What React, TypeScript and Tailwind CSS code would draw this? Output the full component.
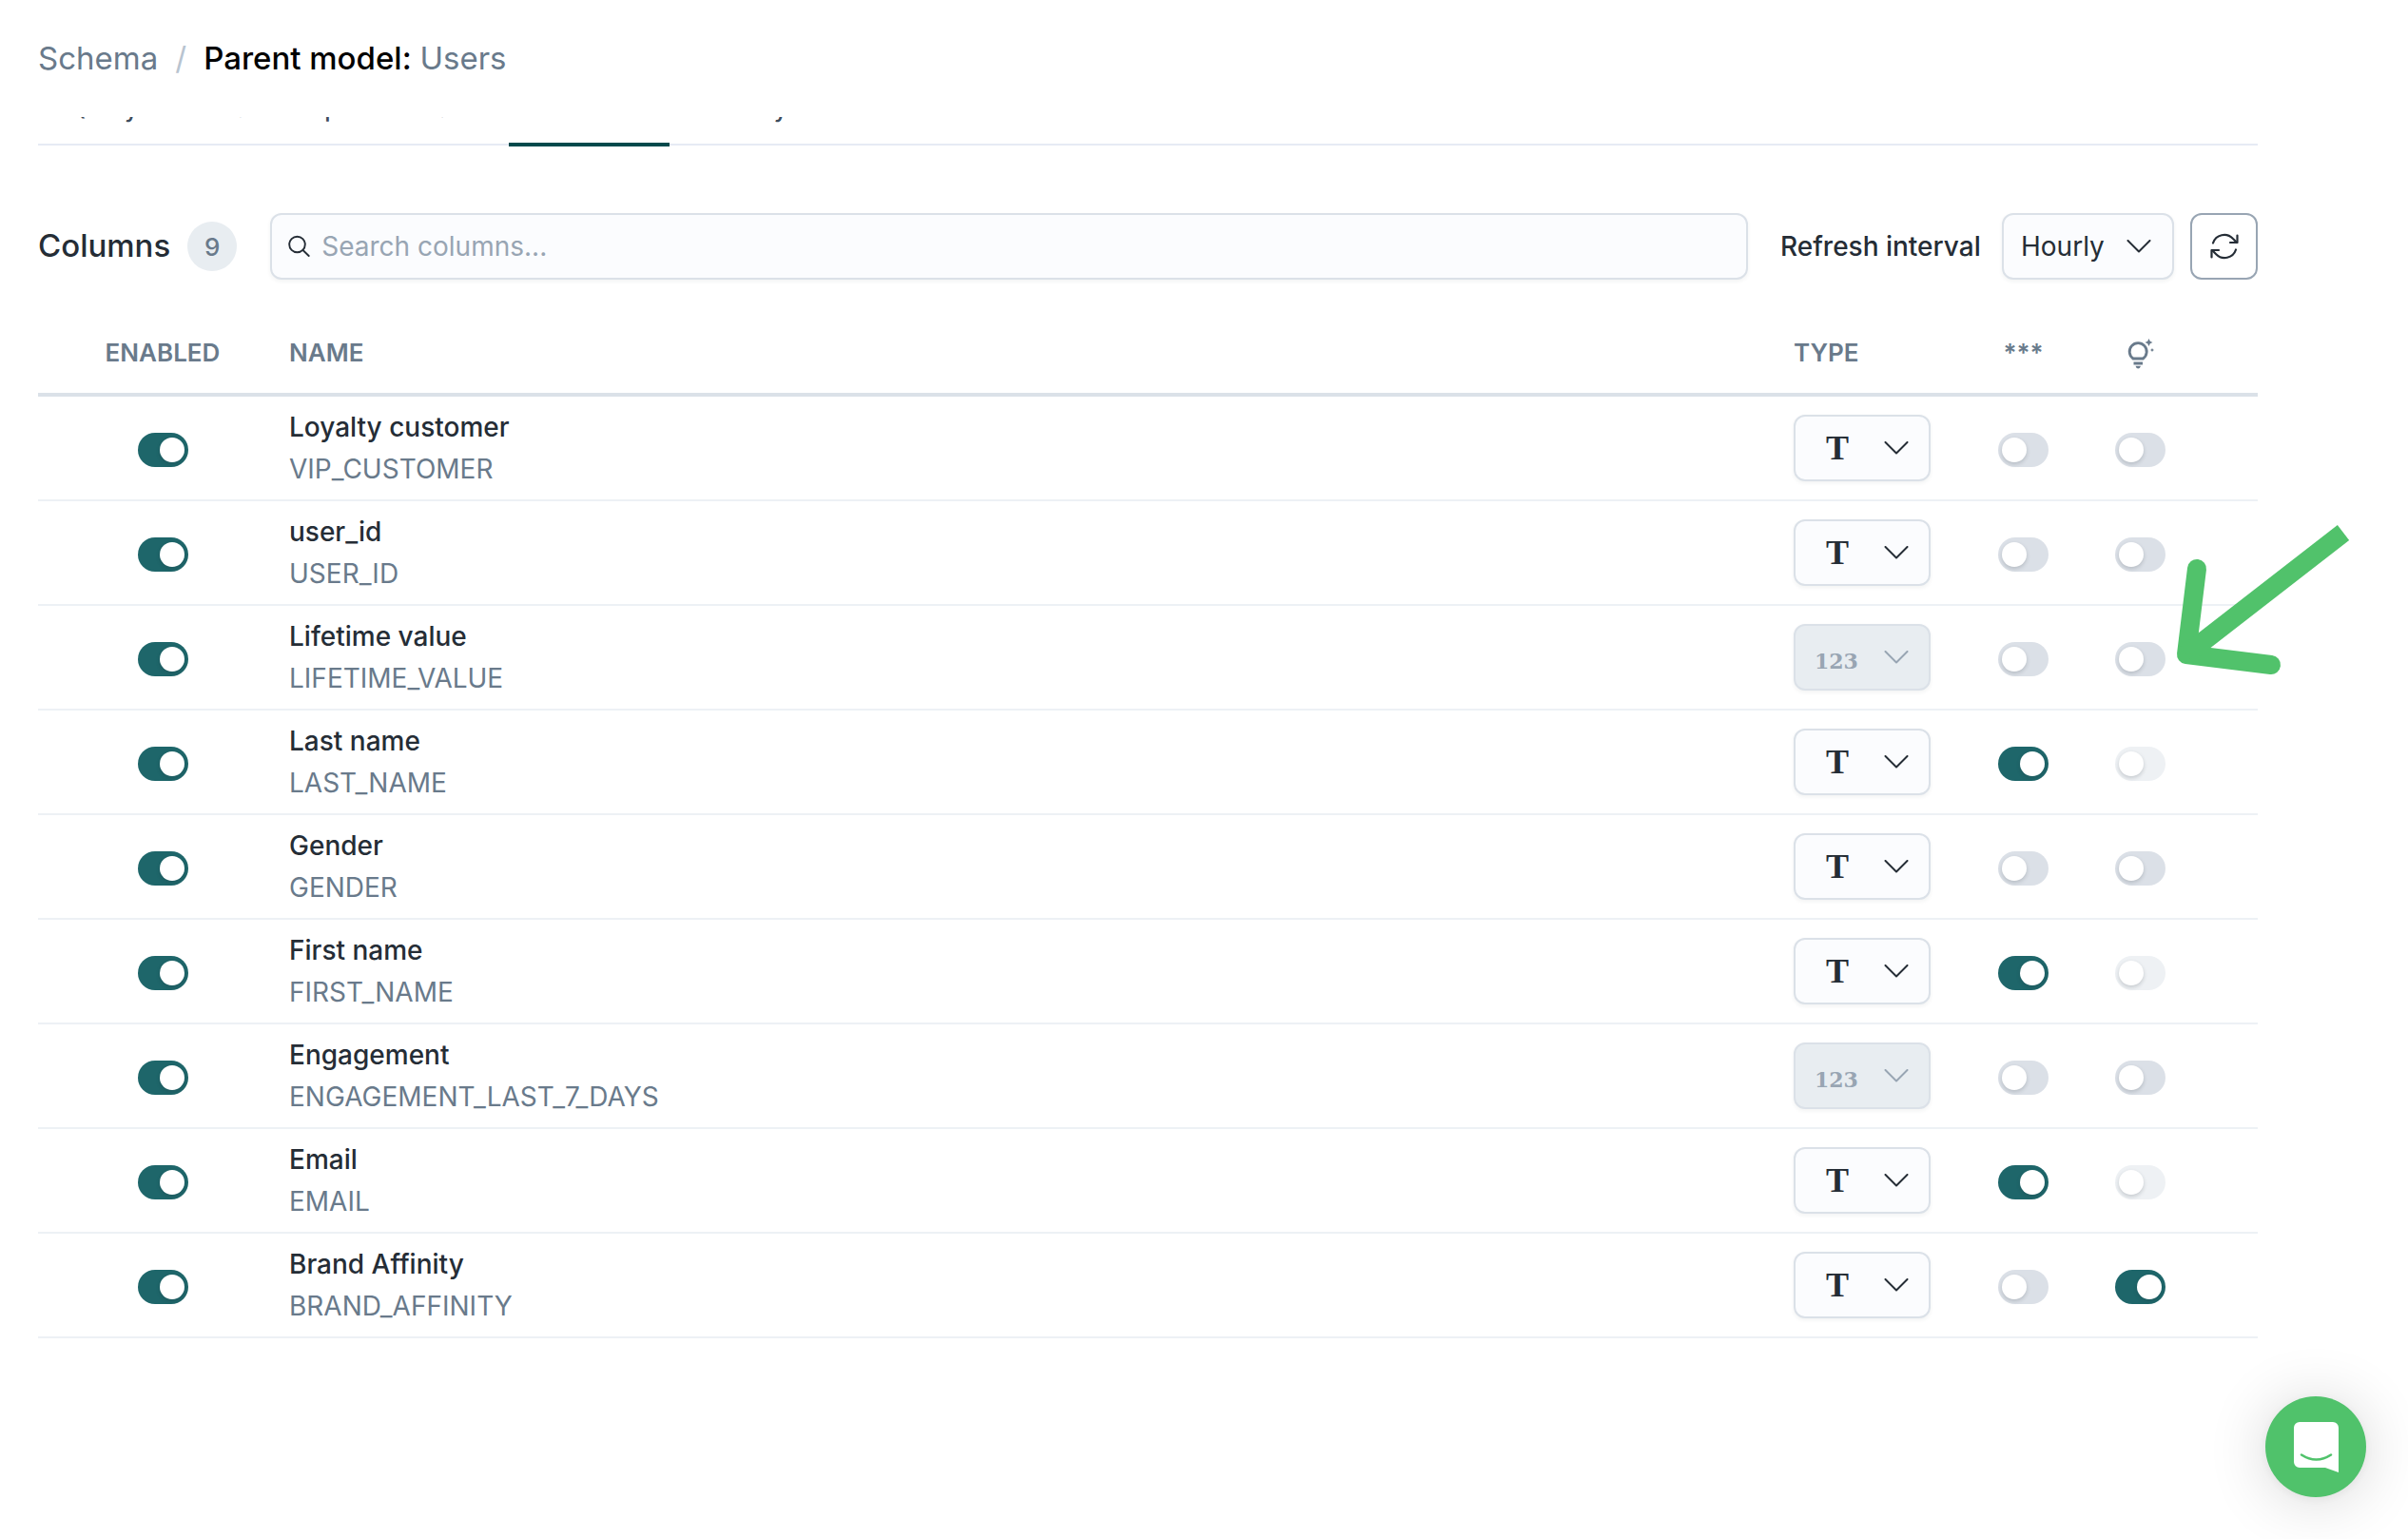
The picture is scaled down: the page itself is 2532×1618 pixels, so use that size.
import { useState } from 'react';
import clsx from 'clsx';

type ColumnType = 'text' | 'number';

interface Column {
  label: string;
  field: string;
  type: ColumnType;
  redacted: boolean;
  suggest: boolean;
}

const initialColumns: Column[] = [
  { label: 'Loyalty customer', field: 'VIP_CUSTOMER', type: 'text', redacted: false, suggest: false },
  { label: 'user_id', field: 'USER_ID', type: 'text', redacted: false, suggest: false },
  { label: 'Lifetime value', field: 'LIFETIME_VALUE', type: 'number', redacted: false, suggest: false },
  { label: 'Last name', field: 'LAST_NAME', type: 'text', redacted: true, suggest: false },
  { label: 'Gender', field: 'GENDER', type: 'text', redacted: false, suggest: false },
  { label: 'First name', field: 'FIRST_NAME', type: 'text', redacted: true, suggest: false },
  { label: 'Engagement', field: 'ENGAGEMENT_LAST_7_DAYS', type: 'number', redacted: false, suggest: false },
  { label: 'Email', field: 'EMAIL', type: 'text', redacted: true, suggest: false },
  { label: 'Brand Affinity', field: 'BRAND_AFFINITY', type: 'text', redacted: false, suggest: true },
];

const tabs = ['Query', 'Relationships', 'Traits', 'Columns', 'Activity'];

function Chevron({ className }: { className?: string }) {
  return (
    <svg viewBox="0 0 26 14" className={clsx('pointer-events-none absolute h-[14px] w-[26px]', className)} fill="none" stroke="currentColor" strokeWidth="2" strokeLinecap="round" strokeLinejoin="round">
      <path d="M1.5 1 13 12.5 24.5 1" />
    </svg>
  );
}

function SearchIcon() {
  return (
    <svg viewBox="0 0 24 24" className="pointer-events-none absolute left-[18px] h-6 w-6 text-[#252d36]" fill="none" stroke="currentColor" strokeWidth="1.9" strokeLinecap="round">
      <circle cx="10.500" cy="10" r="8.300" />
      <path d="m16.500 16 6.200 6" />
    </svg>
  );
}

function RefreshIcon() {
  return (
    <svg viewBox="0 0 30 30" className="h-[30px] w-[30px]" fill="none" stroke="currentColor" strokeWidth="2.2" strokeLinecap="round" strokeLinejoin="round">
      <path d="M3 11.500a12.400 12.400 0 0 1 20.800-4.700L28 11" />
      <path d="M28.500 3.500V11H21" />
      <path d="M27 18.500a12.400 12.400 0 0 1-20.800 4.700L2 19" />
      <path d="M1.500 26.500V19H9" />
    </svg>
  );
}

function BulbIcon() {
  return (
    <svg viewBox="0 0 28 32" className="h-8 w-7" fill="currentColor">
      <path d="M6 21a9 9 0 1 1 10.400 0z" fill="none" stroke="currentColor" strokeWidth="2.8" strokeLinejoin="round" />
      <path d="M6.500 24.500h9.500v3H6.500z" />
      <path d="M8.500 28.800h5.500q-.7 2.700-2.750 2.700t-2.750-2.700z" />
      <path d="M22.500 0l1.300 2.700 2.700 1.300-2.700 1.300-1.300 2.700-1.300-2.700-2.700-1.300 2.700-1.300z" />
      <path d="M26 10l.7 1.300 1.300.7-1.300.7-.7 1.300-.7-1.300-1.300-.7 1.300-.7z" />
    </svg>
  );
}

interface ToggleProps {
  label: string;
  checked: boolean;
  disabled?: boolean;
  onChange: (checked: boolean) => void;
}

function Toggle({ label, checked, disabled, onChange }: ToggleProps) {
  return (
    <div className="flex justify-center pt-1">
      <input
        type="checkbox"
        role="switch"
        aria-label={label}
        checked={checked}
        disabled={disabled}
        onChange={(e) => onChange(e.target.checked)}
        className="flex h-9 w-[53px] appearance-none items-center rounded-full bg-[#dbe0e7] px-1 before:h-[26px] before:w-[26px] before:rounded-full before:bg-white before:shadow-[0_2px_4px_rgba(37,45,54,0.2)] checked:justify-end checked:bg-[#1e666a] disabled:bg-[#eef1f4]"
      />
    </div>
  );
}

function TypeSelect({ column }: { column: Column }) {
  const isNumber = column.type === 'number';

  return (
    <div className="relative flex w-36 items-center">
      <select
        aria-label={`Type of ${column.label}`}
        defaultValue={column.type}
        disabled={isNumber}
        className={clsx(
          'h-[70px] w-full appearance-none rounded-xl border-2 border-[#dbe1e8] font-bold shadow-[0_2px_4px_rgba(37,45,54,0.06)]',
          isNumber
            ? "bg-[#e8edf1] pt-2 pl-5 font-['DejaVu_Serif',serif] text-[22px] text-[#98a5b3] opacity-100"
            : "bg-[#fbfcfe] pl-8 font-['Liberation_Serif',serif] text-4xl text-[#252d36]",
        )}
      >
        <option value="text">T</option>
        <option value="number">123</option>
      </select>
      <Chevron className={clsx('right-[23px]', isNumber ? 'text-[#98a5b3]' : 'text-[#252d36]')} />
    </div>
  );
}

export default function App() {
  const [columns, setColumns] = useState(initialColumns);
  const [enabled, setEnabled] = useState(initialColumns.map(() => true));

  const update = (index: number, patch: Partial<Column>) => {
    setColumns(columns.map((column, i) => (i === index ? { ...column, ...patch } : column)));
  };

  return (
    <div className="relative min-h-screen bg-white font-['Inter',sans-serif] text-[28px] text-[#252d36]">
      {/* Breadcrumb */}
      <header className="flex h-[123px] items-start px-10 pt-[41px] text-[33px] leading-10">
        <a href="#schema" className="text-[#697a8b]">Schema</a>
        <span className="mx-[18px] text-[#b8c4d0]">/</span>
        <h1 className="font-medium text-black">
          Parent model: <span className="font-normal text-[#697a8b]">Users</span>
        </h1>
      </header>

      <main className="pr-[158px] pl-10">
        {/* Tabs, scrolled partly under the header */}
        <nav className="flex h-[31px] items-end gap-px overflow-hidden bg-[linear-gradient(#e6ebf4,#e6ebf4)] bg-[length:100%_2px] bg-[position:0_28px] bg-no-repeat">
          {tabs.map((tab) => (
            <a
              key={tab}
              href={`#${tab.toLowerCase()}`}
              className={clsx(
                'border-b-4 px-8 pb-5 text-[25px] leading-8 font-medium',
                tab === 'Columns' ? 'border-[#024a4c] text-[#024a4c]' : 'border-transparent text-[#3d4b5c]',
              )}
            >
              {tab}
            </a>
          ))}
        </nav>

        {/* Toolbar */}
        <div className="mt-[70px] flex h-[70px] items-center">
          <h2 className="text-[33px] font-medium">Columns</h2>
          <span className="ml-[18px] flex h-[52px] w-[52px] items-center justify-center rounded-full bg-[#e8edf1] text-[26px] font-medium text-[#697a8b]">
            9
          </span>
          <label className="relative ml-[35px] flex flex-1 items-center">
            <SearchIcon />
            <input
              type="search"
              aria-label="Search columns"
              placeholder="Search columns..."
              className="h-[70px] w-full rounded-xl border-2 border-[#dbe1e8] bg-[#fbfcfe] pl-[52px] shadow-[0_2px_4px_rgba(37,45,54,0.06)] placeholder:text-[#98a5b3]"
            />
          </label>
          <label htmlFor="interval" className="ml-[34px] w-[215px] font-medium">Refresh interval</label>
          <div className="relative ml-[18px] flex w-[181px] items-center">
            <select
              id="interval"
              className="h-[70px] w-full appearance-none rounded-xl border-2 border-[#dbe1e8] bg-[#fbfcfe] pl-[18px] shadow-[0_2px_4px_rgba(37,45,54,0.06)]"
            >
              <option>Hourly</option>
              <option>Daily</option>
            </select>
            <Chevron className="right-6" />
          </div>
          <button
            type="button"
            aria-label="Refresh columns"
            className="ml-[17px] flex h-[70px] w-[71px] items-center justify-center rounded-xl border-2 border-[#98a5b3] bg-white"
          >
            <RefreshIcon />
          </button>
        </div>

        {/* Columns table */}
        <table className="mt-[33px] w-full table-fixed border-separate border-spacing-0 text-left">
          <thead className="text-[26px] text-[#697a8b]">
            <tr className="*:h-[90px] *:border-b-4 *:border-[#dbe1e8] *:p-0 *:font-semibold">
              <th className="w-[262px] text-center">ENABLED</th>
              <th>
                <div className="pl-0.5">NAME</div>
              </th>
              <th className="w-[180px]">TYPE</th>
              <th className="w-[123px] text-center" aria-label="Redacted">***</th>
              <th className="w-[185px]" aria-label="Suggestions">
                <div className="flex w-[123px] justify-center pt-1">
                  <BulbIcon />
                </div>
              </th>
            </tr>
          </thead>
          <tbody>
            {columns.map((column, i) => (
              <tr key={column.field} className="*:h-[110px] *:border-b-2 *:border-[#edf1f5] *:p-0">
                <td>
                  <Toggle
                    label={`Enable ${column.label}`}
                    checked={enabled[i]}
                    onChange={(checked) => setEnabled(enabled.map((on, j) => (j === i ? checked : on)))}
                  />
                </td>
                <td>
                  <div className="pl-0.5 leading-[44px]">
                    <div className="font-medium">{column.label}</div>
                    <div className="text-[#697a8b]">{column.field}</div>
                  </div>
                </td>
                <td>
                  <TypeSelect column={column} />
                </td>
                <td>
                  <Toggle
                    label={`Redact ${column.label}`}
                    checked={column.redacted}
                    onChange={(redacted) => update(i, { redacted })}
                  />
                </td>
                <td>
                  <div className="w-[123px]">
                    <Toggle
                      label={`Suggest values for ${column.label}`}
                      checked={column.suggest}
                      disabled={column.redacted}
                      onChange={(suggest) => update(i, { suggest })}
                    />
                  </div>
                </td>
              </tr>
            ))}
          </tbody>
        </table>
      </main>

      {/* Arrow pointing at the suggestion toggle */}
      <svg viewBox="0 0 190 170" className="pointer-events-none absolute top-[548px] right-[58px] h-[170px] w-[190px]" fill="none" stroke="#51c26b" strokeWidth="20" strokeLinejoin="round">
        <path d="M26 50 15 140l89 11" strokeLinecap="round" />
        <path d="M15 140 180 12" />
      </svg>

      {/* Chat launcher */}
      <button
        type="button"
        aria-label="Open chat"
        className="fixed right-11 bottom-11 flex h-[106px] w-[106px] items-center justify-center rounded-full bg-[#50c26b] shadow-[0_2px_12px_rgba(0,0,0,0.06),0_4px_64px_rgba(0,0,0,0.16)]"
      >
        <svg viewBox="0 0 47 53" className="h-[53px] w-[47px]">
          <path d="M6 0h35a6 6 0 0 1 6 6v47l-14-5H6a6 6 0 0 1-6-6V6a6 6 0 0 1 6-6z" fill="#fff" />
          <path d="M8 34.500q15.500 10 31 0" fill="none" stroke="#50c26b" strokeWidth="2.600" strokeLinecap="round" />
        </svg>
      </button>
    </div>
  );
}
